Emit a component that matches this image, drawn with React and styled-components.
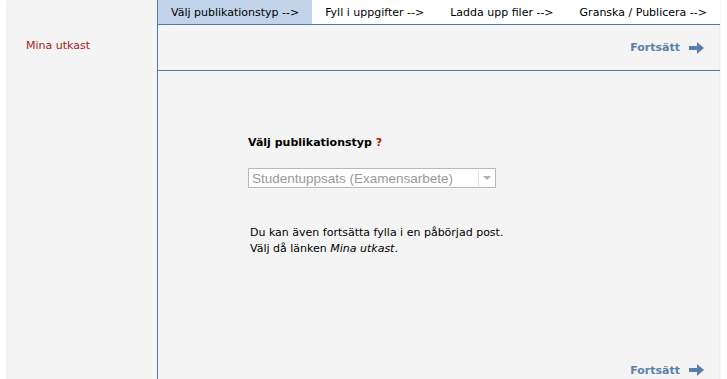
import styled, { createGlobalStyle } from "styled-components";

const GlobalStyle = createGlobalStyle`
  body {
    margin: 0;
    background: #fff;
    font-family: "DejaVu Sans", Verdana, sans-serif;
    font-size: 11px;
    color: #000;
  }
`;

const Page = styled.div`
  display: flex;
  margin-left: 8px;
  width: 711px;
  min-height: 379px;
  background: #f4f4f4;
  box-shadow: 0 0 3px rgba(0, 0, 0, 0.18);
`;

const Sidebar = styled.div`
  width: 149px;
  flex-shrink: 0;
  padding: 39px 0 0 18px;
  box-sizing: border-box;
`;

const SideLink = styled.a`
  color: #a8201a;
  text-decoration: none;
`;

const Main = styled.div`
  flex: 1;
  border-left: 1px solid #4f79b0;
  display: flex;
  flex-direction: column;
`;

const Tabs = styled.div`
  display: flex;
  height: 24px;
  background: #fff;
  border-bottom: 1px solid #4f79b0;
`;

const Tab = styled.div`
  display: flex;
  align-items: center;
  padding: 0 13px;
  background: ${(p) => (p.$active ? "#c1d4ea" : "#fff")};
  white-space: nowrap;
`;

const ActionBar = styled.div`
  display: flex;
  justify-content: flex-end;
  align-items: center;
  height: ${(p) => p.$height || "45px"};
  padding-right: 16px;
  border-bottom: ${(p) => (p.$border ? "1px solid #4f79b0" : "none")};
`;

const NextLink = styled.a`
  display: flex;
  align-items: center;
  gap: 9px;
  color: #5b7fad;
  font-weight: bold;
  text-decoration: none;
`;

const Content = styled.div`
  padding: 65px 0 0 90px;
  height: 281px;
  box-sizing: border-box;
`;

const Label = styled.div`
  font-weight: bold;
  margin-bottom: 19px;
`;

const Help = styled.span`
  color: #b01010;
  margin-left: 4px;
`;

const Select = styled.div`
  display: flex;
  justify-content: space-between;
  align-items: center;
  width: 248px;
  height: 20px;
  box-sizing: border-box;
  border: 1px solid #b8b8b8;
  background: #fff;
  font-family: "Liberation Sans", Arial, sans-serif;
  font-size: 13.5px;
  color: #9a9a9a;
  padding-left: 3px;
`;

const Caret = styled.div`
  width: 15px;
  height: 16px;
  margin-right: 1px;
  border-left: 1px solid #e0e0e0;
  display: flex;
  align-items: center;
  justify-content: center;
  &::after {
    content: "";
    border-left: 4px solid transparent;
    border-right: 4px solid transparent;
    border-top: 4px solid #b0b0b0;
  }
`;

const Info = styled.p`
  margin: 37px 0 0 2px;
  line-height: 16px;
`;

const Arrow = () => (
  <svg width="15" height="12" viewBox="0 0 15 12">
    <rect x="0" y="4" width="9" height="4" fill="#5b7fad" />
    <polygon points="8,0 15,6 8,12" fill="#5b7fad" />
  </svg>
);

const tabs = [
  "Välj publikationstyp -->",
  "Fyll i uppgifter -->",
  "Ladda upp filer -->",
  "Granska / Publicera -->",
];

export default function App() {
  return (
    <>
      <GlobalStyle />
      <Page>
        <Sidebar>
          <SideLink href="#">Mina utkast</SideLink>
        </Sidebar>
        <Main>
          <Tabs>
            {tabs.map((t, i) => (
              <Tab key={t} $active={i === 0}>
                {t}
              </Tab>
            ))}
          </Tabs>
          <ActionBar $border>
            <NextLink href="#">
              Fortsätt <Arrow />
            </NextLink>
          </ActionBar>
          <Content>
            <Label>
              Välj publikationstyp<Help>?</Help>
            </Label>
            <Select>
              Studentuppsats (Examensarbete)
              <Caret />
            </Select>
            <Info>
              Du kan även fortsätta fylla i en påbörjad post.
              <br />
              Välj då länken <i>Mina utkast</i>.
            </Info>
          </Content>
          <ActionBar $height="36px">
            <NextLink href="#">
              Fortsätt <Arrow />
            </NextLink>
          </ActionBar>
        </Main>
      </Page>
    </>
  );
}
